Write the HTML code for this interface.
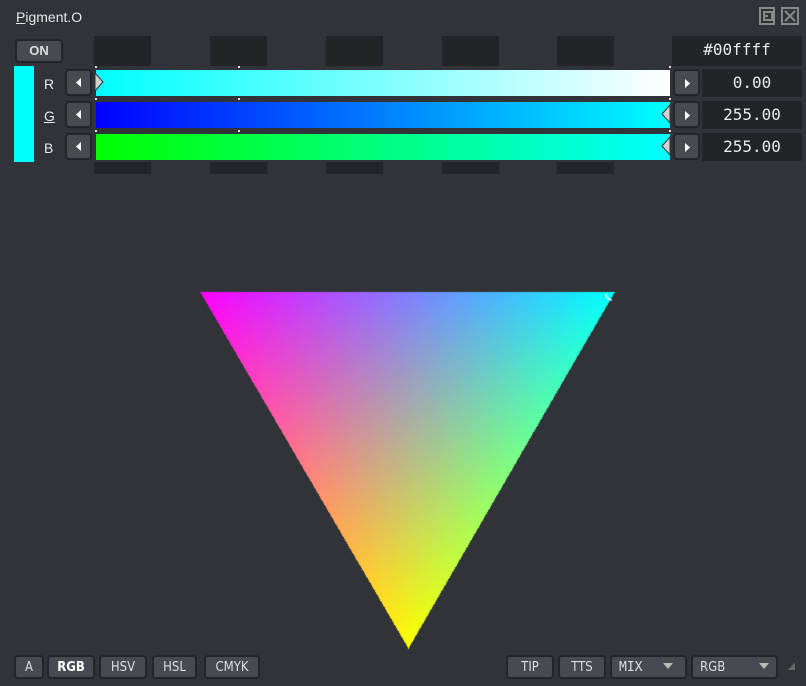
<!DOCTYPE html>
<html><head><meta charset="utf-8"><style>
*{margin:0;padding:0;box-sizing:border-box}
body{width:806px;height:686px;background:#303338;position:relative;overflow:hidden;font-family:"Liberation Sans","DejaVu Sans",sans-serif;color:#e6e6e6}
.a{position:absolute}
.dk{position:absolute;background:#222427}
.btn{position:absolute;background:#474b51;border:2px solid #232528;border-radius:4px;color:#dcdcdc;font-size:13px;text-align:center;line-height:21px;font-family:"DejaVu Sans Condensed","DejaVu Sans",sans-serif}
.arr{position:absolute;width:27px;height:27px;background:#474b51;border:2px solid #232528;border-radius:4px}
.val{position:absolute;background:#222427;font-family:"DejaVu Sans Mono","Liberation Mono",monospace;font-size:16px;color:#e8e8e8;text-align:center;line-height:28px}
.lbl{position:absolute;left:44px;font-size:14px;color:#e6e6e6}
.tick{position:absolute;width:2px;height:2px;background:#ddd}
</style></head><body>
<div class="a" style="left:16px;top:9px;font-size:14px;color:#e6e6e6"><u>P</u>igment.O</div>
<svg class="a" style="left:757px;top:6px" width="44" height="20" viewBox="0 0 44 20" fill="none" stroke="#888" stroke-width="2">
<path d="M3 2h14v16H3z"/><path d="M7 6h8v8H7z"/><path d="M7 10h4"/>
<path d="M25 2h16v16H25z"/><path d="M28 5l10 10M38 5L28 15"/></svg>
<div class="btn" style="left:15px;top:39px;width:48px;height:24px;font-weight:bold;line-height:20px;font-family:'Liberation Sans',sans-serif">ON</div>
<div class="dk" style="left:94px;top:36px;width:57px;height:30px"></div>
<div class="dk" style="left:210px;top:36px;width:57px;height:30px"></div>
<div class="dk" style="left:326px;top:36px;width:57px;height:30px"></div>
<div class="dk" style="left:442px;top:36px;width:57px;height:30px"></div>
<div class="dk" style="left:557px;top:36px;width:57px;height:30px"></div>
<div class="dk" style="left:94px;top:162px;width:57px;height:12px"></div>
<div class="dk" style="left:210px;top:162px;width:57px;height:12px"></div>
<div class="dk" style="left:326px;top:162px;width:57px;height:12px"></div>
<div class="dk" style="left:442px;top:162px;width:57px;height:12px"></div>
<div class="dk" style="left:557px;top:162px;width:57px;height:12px"></div>
<div class="val" style="left:672px;top:36px;width:130px;height:30px">#00ffff</div>
<div class="a" style="left:14px;top:66px;width:20px;height:96px;background:#00ffff"></div>
<div class="lbl" style="top:76px">R</div>
<div class="lbl" style="top:108px"><u>G</u></div>
<div class="lbl" style="top:140px">B</div>
<div class="arr" style="left:65px;top:69px"></div>
<div class="arr" style="left:65px;top:101px"></div>
<div class="arr" style="left:65px;top:133px"></div>
<div class="arr" style="left:673px;top:69px"></div>
<div class="arr" style="left:673px;top:101px"></div>
<div class="arr" style="left:673px;top:133px"></div>
<svg class="a" style="left:0;top:0" width="806" height="180">
<g fill="#fff"><path d="M81 78v9l-5-4.5z"/><path d="M81 110v9l-5-4.5z"/><path d="M81 142v9l-5-4.5z"/>
<path d="M685 79v9l5-4.5z"/><path d="M685 111v9l5-4.5z"/><path d="M685 143v9l5-4.5z"/></g>
</svg>
<div class="a" style="left:96px;top:70px;width:574px;height:26px;background:linear-gradient(90deg,#00ffff,#ffffff)"></div>
<div class="a" style="left:96px;top:102px;width:574px;height:26px;background:linear-gradient(90deg,#0000ff,#00ffff)"></div>
<div class="a" style="left:96px;top:134px;width:574px;height:26px;background:linear-gradient(90deg,#00ff00,#00ffff)"></div>
<div class="tick" style="left:95px;top:66px"></div><div class="tick" style="left:238px;top:66px"></div><div class="tick" style="left:669px;top:66px"></div>
<div class="tick" style="left:95px;top:98px"></div><div class="tick" style="left:238px;top:98px"></div><div class="tick" style="left:669px;top:98px"></div>
<div class="tick" style="left:95px;top:130px"></div><div class="tick" style="left:238px;top:130px"></div><div class="tick" style="left:669px;top:130px"></div>
<svg class="a" style="left:0;top:0" width="806" height="180">
<path d="M95 73l8 9-8 9z" fill="#d0d0d0" stroke="#333" stroke-width="1"/>
<path d="M670 105l-8 9 8 9z" fill="#d0d0d0" stroke="#333" stroke-width="1"/>
<path d="M670 137l-8 9 8 9z" fill="#d0d0d0" stroke="#333" stroke-width="1"/>
</svg>
<div class="val" style="left:702px;top:69px;width:100px;height:28px">0.00</div>
<div class="val" style="left:702px;top:101px;width:100px;height:28px">255.00</div>
<div class="val" style="left:702px;top:133px;width:100px;height:28px">255.00</div>
<canvas id="c" class="a" style="left:0;top:0" width="806" height="686"></canvas>
<div class="btn" style="left:14px;top:655px;width:30px;height:24px">A</div>
<div class="btn" style="left:47px;top:655px;width:48px;height:24px;font-weight:bold;color:#fff">RGB</div>
<div class="btn" style="left:99px;top:655px;width:48px;height:24px">HSV</div>
<div class="btn" style="left:152px;top:655px;width:45px;height:24px">HSL</div>
<div class="btn" style="left:204px;top:655px;width:56px;height:24px">CMYK</div>
<div class="btn" style="left:506px;top:655px;width:48px;height:24px">TIP</div>
<div class="btn" style="left:558px;top:655px;width:48px;height:24px">TTS</div>
<div class="btn" style="left:610px;top:655px;width:77px;height:24px;text-align:left;padding-left:7px;font-family:'DejaVu Sans Mono',monospace">MIX</div>
<div class="btn" style="left:691px;top:655px;width:87px;height:24px;text-align:left;padding-left:7px">RGB</div>
<svg class="a" style="left:0;top:0" width="806" height="686" fill="#bbb">
<path d="M663 663h10l-5 6z"/><path d="M759 663h10l-5 6z"/><path d="M795 662v8h-7z" fill="#666"/>
</svg>
<script>
var c=document.getElementById('c').getContext('2d');
var ax=200,ay=292,bx=614,by=292,cx=408,cy=648;
var img=c.createImageData(806,686),d=img.data;
var den=(by-cy)*(ax-cx)+(cx-bx)*(ay-cy);
var e=-1e-6;
for(var y=ay;y<=cy;y++)for(var x=ax;x<=bx;x++){
var l1=((by-cy)*(x-cx)+(cx-bx)*(y-cy))/den;
var l2=((cy-ay)*(x-cx)+(ax-cx)*(y-cy))/den;
var l3=1-l1-l2;
if(y>ay&&(l1<e||l2<e))continue;
if(y==ay){l3=0;}
l1=Math.max(0,l1);l2=Math.max(0,l2);l3=Math.max(0,l3);
var r=255*l1+255*l3,g=255*l2+255*l3,b=255*l1+255*l2;
var i=(y*806+x)*4;d[i]=Math.min(255,r);d[i+1]=Math.min(255,g);d[i+2]=Math.min(255,b);d[i+3]=255;}
c.putImageData(img,0,0);
c.strokeStyle='#fff';c.lineWidth=1.5;c.beginPath();c.arc(612,294,6,Math.PI*0.5,Math.PI*1.0);c.stroke();
</script>
</body></html>
